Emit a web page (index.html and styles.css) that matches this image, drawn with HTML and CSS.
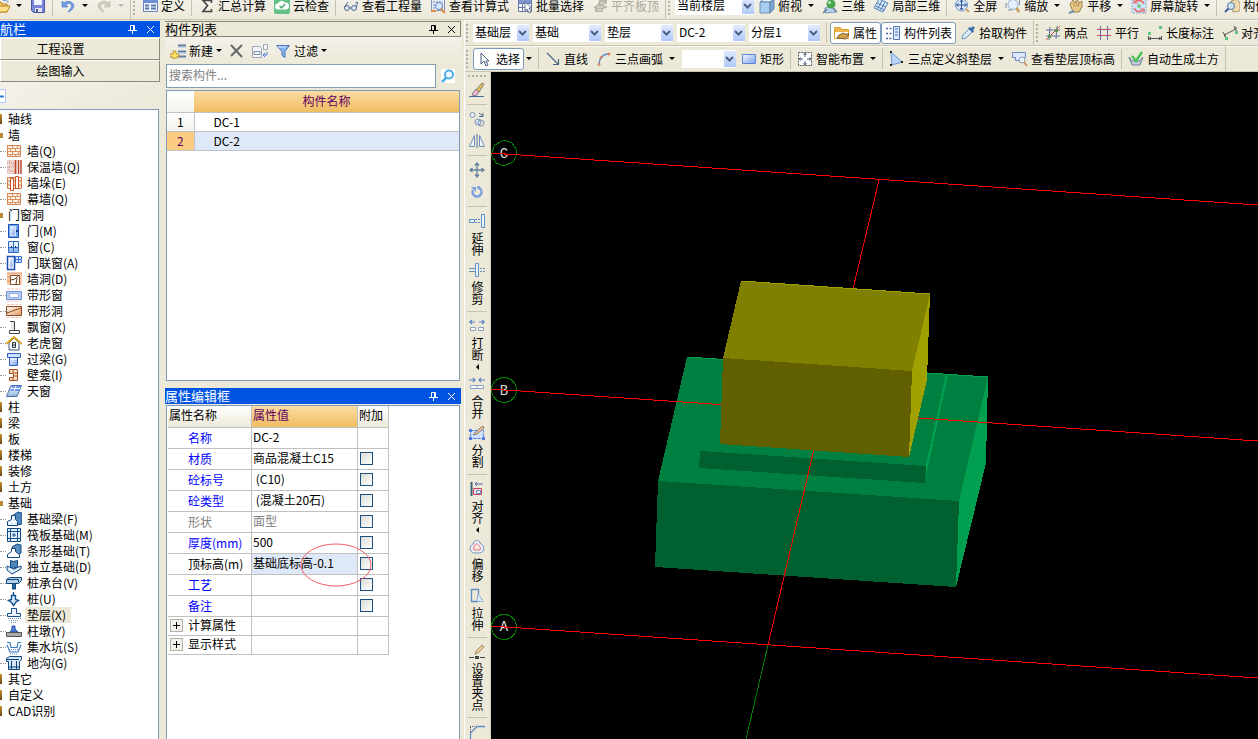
FILE: index.html
```html
<!DOCTYPE html>
<html lang="zh-CN">
  <head>
    <meta charset="UTF-8" />
    <meta name="viewport" content="width=device-width, initial-scale=1.0" />
    <title>绘图输入</title>
    <link rel="stylesheet" href="styles.css">
  </head>
  <body>
    <!-- shared gradients and symbols -->
    <svg class="defs" aria-hidden="true">
      <defs>
        <linearGradient id="blue" x1="0" y1="0" x2="1" y2="1"><stop offset="0" stop-color="#f4f9ff"/><stop offset="1" stop-color="#7da2e8"/></linearGradient>
        <linearGradient id="orange" x1="0" y1="0" x2="1" y2="1"><stop offset="0" stop-color="#fff"/><stop offset="1" stop-color="#e8965a"/></linearGradient>
        <linearGradient id="steel" x1="0" y1="0" x2="0" y2="1"><stop offset="0" stop-color="#fff"/><stop offset="1" stop-color="#8fb4d8"/></linearGradient>
      </defs>
      <symbol id="bricks" viewBox="0 0 16 16"><path d="M1.500 2.500h13v11h-13z" fill="#fdf1e4" stroke="#d0804f"/><path d="M1 5.500h14M1 8.500h14M1 11.500h14M6.500 2v3M11.500 2v3M4.500 6v3M9.500 6v3M6.500 9v3M12.500 9v3M4.500 11v3M9.500 11v3" stroke="#dc9160" fill="none"/></symbol>
      <symbol id="pin" viewBox="0 0 9 9"><path d="M2.500 5V.5h4V5M5.500 1v4M0 5.500h9M4.500 6v3" fill="none" stroke="currentColor"/></symbol>
      <symbol id="cross" viewBox="0 0 9 9"><path d="M1 1l7 7M8 1L1 8" fill="none" stroke="currentColor"/></symbol>
    </svg>

    <div class="toolbar topbar">
      <button aria-label="打开"><svg class="ico" viewBox="0 0 16 16"><path d="M1 4h6l1 2h5v8H1z" fill="#f4c860" stroke="#b98224"/><path d="M4 8h12l-3 6H1z" fill="#ffe08c" stroke="#b98224"/><path d="M9 3c3-2 5 0 5 2" stroke="#5b86c8" fill="none"/></svg></button>
      <button class="caret" aria-label="打开选项"></button>
      <button aria-label="保存"><svg class="ico" viewBox="0 0 16 16"><path d="M1.500 1.500h13v13h-11l-2-2z" fill="#7b88d8" stroke="#4a55a4"/><path d="M4 1h8v6H4z" fill="#f2f4ff"/><path d="M5 10h7v4H5z" fill="#dfe3ee"/><path d="M6 11h2v3H6z" fill="#4a55a4"/></svg></button>
      <span class="sep"></span>
      <button aria-label="撤销"><svg class="ico" viewBox="0 0 16 16"><path d="M2 3v6h6L6 7c3-3 7-1 5 3l-3 4c6-2 8-8 3-10C8 3 6 3 4 5z" fill="#6f9be4" stroke="#4774c4" stroke-width=".6"/></svg></button>
      <button class="caret" aria-label="撤销选项"></button>
      <button aria-label="恢复" disabled><svg class="ico" viewBox="0 0 16 16"><path d="M14 3v6H8l2-2C7 4 3 6 5 10l3 4C2 12 0 6 5 4c3-1 5-1 7 1z" fill="#cfcdc2" stroke="#b5b2a5" stroke-width=".6"/></svg></button>
      <button class="caret dim" aria-label="恢复选项" disabled></button>
      <span class="group-end"></span><span class="grip"></span>
      <button><svg class="ico" viewBox="0 0 16 16"><path d="M1.500 2.500h14v11h-14z" fill="#edf3ff" stroke="#6b82b8"/><path d="M1 2h15v3H1z" fill="#6d8fd6"/><path d="M3 7.500h4M3 10.500h4M9 7.500h5M9 10.500h5" stroke="#5c77b4" stroke-width="2"/></svg>定义</button>
      <span class="sep"></span>
      <button><svg class="ico" viewBox="0 0 16 16"><path d="M12.500 5V2.500H4l4.500 5L4 13.500h8.500V11" fill="none" stroke="#444" stroke-width="1.600"/></svg>汇总计算</button>
      <button><svg class="ico" viewBox="0 0 16 16"><rect width="16" height="16" rx="2" fill="#62c184"/><path d="M4 11.500a3 3 0 0 1 0-6 4 4 0 0 1 7-1 3.500 3.500 0 0 1 1 7z" fill="#fff"/><path d="M5.500 8l2 2 3.500-4" stroke="#41a667" fill="none" stroke-width="1.400"/></svg>云检查</button>
      <span class="sep"></span>
      <button><svg class="ico" viewBox="0 0 16 16"><circle cx="4" cy="10" r="2.500" fill="#dce8fa" stroke="#56678c"/><circle cx="11" cy="10" r="2.500" fill="#dce8fa" stroke="#56678c"/><path d="M6.500 10h2M1.500 9L5 4M13.500 9l1-5-2 1" stroke="#56678c" fill="none"/></svg>查看工程量</button>
      <button><svg class="ico" viewBox="0 0 16 16"><path d="M1.500 1.500h13v11h-13z" fill="#e8eefa" stroke="#8492b5"/><path d="M3 4h10M3 7h10M3 10h10" stroke="#6c7ca6" stroke-dasharray="2 1"/><circle cx="9" cy="8" r="3.500" fill="#d8ebff" stroke="#6585bb"/><path d="M11 11l4 4M1 13h5" stroke="#d98c3d" stroke-width="2"/></svg>查看计算式</button>
      <button><svg class="ico" viewBox="0 0 16 16"><path d="M1.500 1.500h13v12h-13zM1 5.500h13M1 9.500h13M5.500 1v12M10.500 1v12" fill="#f7f9ff" stroke="#697aa8"/><path d="M2 2h12v3H2z" fill="#8296cf"/><path d="M8 4v9l2-2 2 4 2-1-2-4h3z" fill="#fff" stroke="#44577f" stroke-width=".8"/></svg>批量选择</button>
      <button disabled><svg class="ico" viewBox="0 0 16 16"><path d="M1 10l5-4 1-4 8-1v4l-4 3h4v2l-4 1v3H3v-4z" fill="#b9b6a8"/><path d="M5 9h6M5 12h5M8 5h5" stroke="#ece9d8"/></svg>平齐板顶</button>
      <span class="group-end"></span><span class="grip"></span>
      <select class="combo floor" aria-label="当前楼层"><option>当前楼层</option></select>
      <button><svg class="ico" viewBox="0 0 16 16"><path d="M1 4l4-3h10l-4 3z" fill="#e8f4ff" stroke="#57789e" stroke-width=".8"/><path d="M1 4h10v11H1z" fill="#a9cdee" stroke="#57789e" stroke-width=".8"/><path d="M11 4l4-3v10l-4 4z" fill="#7aa6d2" stroke="#57789e" stroke-width=".8"/></svg>俯视</button>
      <button class="caret" aria-label="视图选项"></button>
      <button><svg class="ico" viewBox="0 0 16 16"><path d="M3 10l7-3 4 7-11 1z" fill="#b6d0ee" stroke="#6484ab" stroke-width=".8"/><circle cx="9" cy="6" r="4.500" fill="#4aa850"/><circle cx="7.500" cy="4.500" r="1.500" fill="#bfeab8"/><path d="M1 15l4-4M11 10l4 4" stroke="#69809f" stroke-width="1.500"/></svg>三维</button>
      <button><svg class="ico" viewBox="0 0 16 16"><path d="M1 10L6 1l9 4-5 9z" fill="#cfe5fb" stroke="#5c83b3"/><path d="M4 5l9 4M2.500 8l9 4M9 2.500L4.500 11M12 4L7.500 12.500" stroke="#5c83b3"/></svg>局部三维</button>
      <span class="sep"></span>
      <button><svg class="ico" viewBox="0 0 16 16"><circle cx="7.500" cy="7" r="6" fill="#d8e7fb" stroke="#7590b8"/><path d="M7.500 2v10M2.500 7h10M6 4l1.500-2L9 4M6 10l1.500 2L9 10M4.500 5.500L2.500 7l2 1.500M10.500 5.500l2 1.500-2 1.500" fill="none" stroke="#35599c"/><path d="M12 11l3 3" stroke="#d5a55d" stroke-width="2"/></svg>全屏</button>
      <button><svg class="ico" viewBox="0 0 16 16"><circle cx="8" cy="6.500" r="5" fill="#e5f0fc" stroke="#8fa9c8"/><path d="M11.500 10l2.500 4" stroke="#cc9c57" stroke-width="2.500"/><path d="M1 5v5M3 12h4M14.500 2v5" stroke="#7a93b3"/></svg>缩放</button>
      <button class="caret" aria-label="缩放选项"></button>
      <button><svg class="ico" viewBox="0 0 16 16"><path d="M2 6l3-4 2 3 2-4 2 4 3-2v6l-3 5H5z" fill="#e9c682" stroke="#9d8250"/><path d="M5 5l2 4M8 4l1 4M11 5l-1 4" stroke="#9d8250" stroke-width=".8"/><path d="M1 15l5-2" stroke="#718eb9" stroke-width="2"/></svg>平移</button>
      <button class="caret" aria-label="平移选项"></button>
      <button><svg class="ico" viewBox="0 0 16 16"><path d="M1 1h14v14H1z" fill="#cfe6fa" stroke="#88acd0" stroke-dasharray="2 1"/><path d="M3 10a5.500 5.500 0 0 0 9 2M13 6a5.500 5.500 0 0 0-9-2" fill="none" stroke="#ea6260" stroke-width="1.500"/><path d="M3 1v4h4M13 15v-4H9" fill="none" stroke="#ea6260" stroke-width="1.200"/><circle cx="8" cy="8" r="2" fill="#79c583"/></svg>屏幕旋转</button>
      <button class="caret" aria-label="旋转选项"></button>
      <span class="sep"></span>
      <button><svg class="ico" viewBox="0 0 16 16"><path d="M7 3l6-2 3 4v8l-7 1z" fill="#eed9ad" stroke="#9a885f" stroke-width=".8"/><circle cx="7" cy="8" r="3.500" fill="#cfe4fa" stroke="#58789f"/><path d="M4.500 10.500L1 14" stroke="#375f98" stroke-width="2"/></svg>构件</button>
    </div>

    <div class="workspace">
      <nav class="nav">
        <div class="panel-title active">航栏<span class="title-tools"><svg><use href="#pin"/></svg><svg><use href="#cross"/></svg></span></div>
        <button class="nav-button">工程设置</button>
        <button class="nav-button">绘图输入</button>
        <div class="nav-tools"><svg viewBox="0 0 6 14"><path d="M0 .5h5.500v13H0" fill="#fff" stroke="#b4c5ff"/><path d="M0 7.500h4" stroke="#2f7ed0" stroke-width="2"/></svg></div>
        <ul class="tree">
          <li class="root"><i class="folder"></i><span>轴线</span></li>
          <li class="root"><i class="folder open"></i><span>墙</span></li>
          <li><svg><use href="#bricks"/></svg><span>墙(Q)</span></li>
          <li><svg viewBox="0 0 16 16"><path d="M1 1h10v14H1z" fill="#f2d8d2"/><path d="M1 4h9M1 8h9M1 12h9M4 1v3M7 4v4M3 8v4M7 12v3" stroke="#c98f88" stroke-dasharray="1 1"/><path d="M9.500 1v14M12.500 1v14M15 1v14" stroke="#b8452a" stroke-width="1.500"/></svg><span>保温墙(Q)</span></li>
          <li><svg viewBox="0 0 16 16"><path d="M1.500 2.500h14v11h-14z" fill="#fde5d3" stroke="#d0804f"/><path d="M1 6h14M1 10h14" stroke="#d58a5c"/><path d="M4.500 3.500h3v12h-3zM9.500 1.500h3v12h-3z" fill="#fff" stroke="#cf5526"/></svg><span>墙垛(E)</span></li>
          <li><svg><use href="#bricks"/></svg><span>幕墙(Q)</span></li>
          <li class="root"><i class="folder open"></i><span>门窗洞</span></li>
          <li><svg viewBox="0 0 16 16"><path d="M2.500 1.500h10v13h-10z" fill="#6fa1ee" stroke="#1e4fb6"/><path d="M4.500 3.500h5v9h-5z" fill="url(#blue)" stroke="#d7e6ff"/><path d="M10 7h2v2h-2z" fill="#113a82"/></svg><span>门(M)</span></li>
          <li><svg viewBox="0 0 16 16"><path d="M2.500 2.500h10v11h-10z" fill="#e6f0ff" stroke="#2f6ac4"/><path d="M3 9h9v4H3z" fill="#95b9f2"/><path d="M7.500 3v11M3 8.500h9" stroke="#2f6ac4"/><path d="M5 8h1M9 8h1" stroke="#123c80" stroke-width="2"/></svg><span>窗(C)</span></li>
          <li><svg viewBox="0 0 16 16"><path d="M1.500 1.500h7v13h-7z" fill="#fff" stroke="#1a4cb0" stroke-width="1.500"/><path d="M3.500 3.500h3v9h-3z" fill="url(#blue)"/><path d="M9.500 1.500h6v6h-6zM12.500 1v6M9 4.500h6" fill="#d7e6ff" stroke="#3d74d0"/></svg><span>门联窗(A)</span></li>
          <li><svg viewBox="0 0 16 16"><path d="M1 2h15v12H1z" fill="#f9c9a8"/><path d="M4.500 4.500h9v9h-9z" fill="#fff" stroke="#8c4a25"/><path d="M5 9l4-1 3-3M10 13l1-6" fill="none" stroke="#5f3a22"/><path d="M1 6h3M1 10h3M1 2h15" stroke="#d88b68"/></svg><span>墙洞(D)</span></li>
          <li><svg viewBox="0 0 16 16"><path d="M1 2h14M1 14h14" stroke="#f6c1b6" stroke-dasharray="3 1"/><path d="M.5 4.500h15v8H.5z" fill="#b9cff5" stroke="#7093d8"/><path d="M3.500 6.500h9v4h-9z" fill="#fff" stroke="#93aee0"/></svg><span>带形窗</span></li>
          <li><svg viewBox="0 0 16 16"><path d="M1 1.500h14M1 14.500h14" stroke="#f6c1b6" stroke-dasharray="3 1"/><path d="M.5 3.500h15v9H.5z" fill="url(#orange)" stroke="#8c4a25"/><path d="M1 10l8-3 6-2" stroke="#8c4a25" fill="none"/></svg><span>带形洞</span></li>
          <li><svg viewBox="0 0 16 16"><path d="M5 2h3v9H5z" fill="#e7e7e7"/><path d="M4 2.500h4.500V11M3.500 14.500h10v-3h-10z" fill="none" stroke="#444"/></svg><span>飘窗(X)</span></li>
          <li><svg viewBox="0 0 16 16"><path d="M3 8v7h10V8L8 3z" fill="#fff" stroke="#33547c"/><path d="M0 9l8-7 8 7" stroke="#e0a820" stroke-width="2" fill="none"/><path d="M6.500 7.500h3v5h-3zM6 10h4" stroke="#333" fill="#d9eaff"/></svg><span>老虎窗</span></li>
          <li><svg viewBox="0 0 16 16"><path d="M1.500 2.500h13v4h-13z" fill="#cfe0ff" stroke="#2d5cc0"/><path d="M3.500 6.500h8v8h-8z" fill="url(#blue)" stroke="#2d5cc0"/><path d="M5 8h6" stroke="#fff"/></svg><span>过梁(G)</span></li>
          <li><svg viewBox="0 0 16 16"><path d="M3.500 2.500h8v11h-8v-3h4v-4h-4z" fill="#fbe0c8" stroke="#a84d20"/><path d="M8 6h4M8 9h4M7 2v4M7 11v3" stroke="#a84d20"/></svg><span>壁龛(I)</span></li>
          <li><svg viewBox="0 0 16 16"><path d="M5 2.500h10.500L11 13.500H.5z" fill="url(#steel)" stroke="#4c6ea8"/><path d="M6 3h9l-2 5H4z" fill="#6c98ee"/><path d="M10 3L8 8M5 5.500h9" stroke="#fff"/></svg><span>天窗</span></li>
          <li class="root"><i class="folder"></i><span>柱</span></li>
          <li class="root"><i class="folder"></i><span>梁</span></li>
          <li class="root"><i class="folder"></i><span>板</span></li>
          <li class="root"><i class="folder"></i><span>楼梯</span></li>
          <li class="root"><i class="folder"></i><span>装修</span></li>
          <li class="root"><i class="folder"></i><span>土方</span></li>
          <li class="root"><i class="folder open"></i><span>基础</span></li>
          <li><svg viewBox="0 0 16 16"><path d="M6 5l6-4 4 1v11l-5 1z" fill="#4d86bd" stroke="#0f457d"/><path d="M1.500 14.500v-4l4-2v-4h4v4l2 2v4z" fill="#e8f3ff" stroke="#0f457d"/></svg><span>基础梁(F)</span></li>
          <li><svg viewBox="0 0 16 16"><path d="M1.500 1.500h13v13h-13z" fill="#e3f0ff" stroke="#0f457d"/><path d="M4.500 1v14M11.500 1v14M1 4.500h14M1 11.500h14M6 8h4M8 6v4" stroke="#174f8c"/></svg><span>筏板基础(M)</span></li>
          <li><svg viewBox="0 0 16 16"><path d="M6 4l5-3 4 1v8l-4 3z" fill="#5a8fc2" stroke="#0f457d"/><path d="M1.500 14.500v-3l4-3v-3h4v3l4 3v3z" fill="#fff" stroke="#0f457d"/></svg><span>条形基础(T)</span></li>
          <li><svg viewBox="0 0 16 16"><path d="M1 7l7 3 7-3v3l-9 5-5-4z" fill="#dcebfa" stroke="#0f457d"/><path d="M4.500 1.500l3 1 4-1v6l-4 2-3-2z" fill="#4d86bd" stroke="#0f457d"/></svg><span>独立基础(D)</span></li>
          <li><svg viewBox="0 0 16 16"><path d="M.5 4.500l3-2h12v3l-3 3H.5z" fill="#b5d1ea" stroke="#0f457d"/><path d="M.5 4.500h12v3" fill="none" stroke="#0f457d"/><path d="M6.500 9v5h3V9" fill="#2b6ca8" stroke="#0f457d"/></svg><span>桩承台(V)</span></li>
          <li><svg viewBox="0 0 16 16"><path d="M7.500 1v3M5.500 4.500h4v4l3 1-3 2-2 3-2-3-3-2 3-1z" fill="#dbeafa" stroke="#174f8c" stroke-width="1.400"/></svg><span>桩(U)</span></li>
          <li class="selected"><svg viewBox="0 0 16 16"><path d="M5.500 1.500h5v5h4v3h-13v-3h4z" fill="#e9f3ff" stroke="#174f8c"/><path d="M2 11.500h13M3 13.500h10M5 15.500h6" stroke="#6f90b4" stroke-dasharray="1 1"/></svg><span>垫层(X)</span></li>
          <li><svg viewBox="0 0 16 16"><path d="M6 3h3v3l3 3H4l2-3z" fill="#4b7bd4" stroke="#2a54a0"/><path d="M.5 9.500h15v4H.5z" fill="#aaa" stroke="#555"/></svg><span>柱墩(Y)</span></li>
          <li><svg viewBox="0 0 16 16"><path d="M1 3.500h3l1 5h6l1-5h3M1 6l3 7h8l3-7" fill="none" stroke="#3c7ec2" stroke-width="1.200"/><path d="M3 10.500h10M5 12.500h6M4 15h8" stroke="#5d96d0" stroke-dasharray="1 1"/></svg><span>集水坑(S)</span></li>
          <li><svg viewBox="0 0 16 16"><path d="M.5 3.500l3-2h12v3l-2 2v8h-11v-8h-2z" fill="#d3e5f6" stroke="#0f457d"/><path d="M1 4.500h12M5.500 6v8M10.500 6v8M3 12h10" stroke="#0f457d"/></svg><span>地沟(G)</span></li>
          <li class="root"><i class="folder"></i><span>其它</span></li>
          <li class="root"><i class="folder"></i><span>自定义</span></li>
          <li class="root"><i class="folder"></i><span>CAD识别</span></li>
        </ul>
      </nav>

      <div class="side">
        <section class="list-panel">
          <div class="panel-title">构件列表<span class="title-tools"><svg><use href="#pin"/></svg><svg><use href="#cross"/></svg></span></div>
          <div class="list-tools">
            <button class="new"><svg class="ico" viewBox="0 0 16 16"><path d="M8 2.500h8M8 8.500h8M8 13.500h8" stroke="#5f7c9e" stroke-width="2"/><path d="M8 4.500h8M8 10.500h8" stroke="#c4d8ee"/><path d="M3 8h3v3h3v3H6v2H3v-2H0v-3h3z" fill="#ffe169" stroke="#a78423" stroke-width=".8"/></svg>新建<i class="arrow"></i></button>
            <button aria-label="删除"><svg class="ico" viewBox="0 0 16 16"><path d="M2 2l11 12M13 2L2 13" stroke="#666" stroke-width="2"/></svg></button>
            <button aria-label="复制"><svg class="ico" viewBox="0 0 16 16"><path d="M.5 3.500h7l2 2v9h-9zM11.500 1.500h4v5h-4z" fill="#f6f8fc" stroke="#9ba6b8"/><path d="M2 8.500h6v3H2z" fill="none" stroke="#7b8daa"/><path d="M15 9v3h-3m1-2l-2 2 2 2" fill="none" stroke="#4c7ce0"/></svg></button>
            <button class="filter"><svg class="ico" viewBox="0 0 16 16"><path d="M1.500 2.500h13L10 8.500v6l-3-2v-4z" fill="#86b2f0" stroke="#4b78bd"/><path d="M3 4h8" stroke="#d8e8ff"/></svg>过滤<i class="arrow"></i></button>
          </div>
          <div class="search">
            <input type="text" placeholder="搜索构件..." aria-label="搜索构件">
            <button aria-label="搜索"><svg viewBox="0 0 14 14"><circle cx="8" cy="5.500" r="4" fill="#f2faff" stroke="#4eaee6" stroke-width="2"/><path d="M5 9l-4 4" stroke="#4eaee6" stroke-width="2.500"/></svg></button>
          </div>
          <div class="list-box">
            <table class="components">
              <tr><th class="idx"></th><th>构件名称</th></tr>
              <tr><td class="idx">1</td><td>DC-1</td></tr>
              <tr class="current"><td class="idx">2</td><td>DC-2</td></tr>
            </table>
          </div>
        </section>

        <section class="props-panel">
          <div class="panel-title active">属性编辑框<span class="title-tools"><svg><use href="#pin"/></svg><svg><use href="#cross"/></svg></span></div>
          <div class="props-box">
            <table class="props">
              <tr><th>属性名称</th><th class="value">属性值</th><th class="extra">附加</th></tr>
              <tr><td>名称</td><td>DC-2</td><td></td></tr>
              <tr><td>材质</td><td>商品混凝土C15</td><td><input type="checkbox" aria-label="材质附加"></td></tr>
              <tr><td>砼标号</td><td>&nbsp;(C10)</td><td><input type="checkbox" aria-label="砼标号附加"></td></tr>
              <tr><td>砼类型</td><td>&nbsp;(混凝土20石)</td><td><input type="checkbox" aria-label="砼类型附加"></td></tr>
              <tr class="muted"><td>形状</td><td>面型</td><td><input type="checkbox" aria-label="形状附加"></td></tr>
              <tr><td>厚度(mm)</td><td>500</td><td><input type="checkbox" aria-label="厚度附加"></td></tr>
              <tr class="editing"><td>顶标高(m)</td><td>基础底标高-0.1</td><td><input type="checkbox" aria-label="顶标高附加"></td></tr>
              <tr><td>工艺</td><td></td><td><input type="checkbox" aria-label="工艺附加"></td></tr>
              <tr><td>备注</td><td></td><td><input type="checkbox" aria-label="备注附加"></td></tr>
              <tr class="group"><td><button aria-label="展开"></button>计算属性</td><td></td><td></td></tr>
              <tr class="group"><td><button aria-label="展开"></button>显示样式</td><td></td><td></td></tr>
            </table>
            <svg class="mark" viewBox="0 0 72 44"><ellipse cx="36" cy="22" rx="35" ry="21" fill="none" stroke="#f25f5f"/></svg>
          </div>
        </section>
      </div>

      <main class="main">
        <div class="toolbar">
          <span class="grip"></span>
          <select class="combo short" aria-label="楼层"><option>基础层</option></select>
          <select class="combo" aria-label="构件大类"><option>基础</option></select>
          <select class="combo" aria-label="构件类型"><option>垫层</option></select>
          <select class="combo" aria-label="构件"><option>DC-2</option></select>
          <select class="combo layer" aria-label="分层"><option>分层1</option></select>
          <span class="sep"></span>
          <button class="pressed"><svg class="ico" viewBox="0 0 16 16"><path d="M.5 2.500h6l1 2h7v9H.5z" fill="#fff" stroke="#d9a037"/><path d="M1 3h6l1 2h6v2H1z" fill="#efb54a"/><path d="M3 13l2-3 4-2 2 1h4l-3 5z" fill="#d8a24a" stroke="#60481c" stroke-width=".8"/></svg>属性</button>
          <button class="pressed"><svg class="ico" viewBox="0 0 16 16"><path d="M1 3.500h2M1 8.500h2M1 13.500h2M4.500 3.500h2M4.500 8.500h2M4.500 13.500h2" stroke="#4d6496" stroke-width="1.500"/><path d="M8.500 1.500h6v13h-6z" fill="#dfeaff" stroke="#4c73bd"/><path d="M10 4h3M10 7h3M10 10h3" stroke="#4167b4"/></svg>构件列表</button>
          <button><svg class="ico" viewBox="0 0 16 16"><path d="M2 14l1-4 6-6 3 3-6 6z" fill="#d9edff" stroke="#6b8fb5"/><path d="M8 3l5 5 1-2-1-1 2-2-2-2-2 2-1-1z" fill="#376dab"/></svg>拾取构件</button>
          <span class="group-end"></span><span class="grip"></span>
          <button><svg class="ico" viewBox="0 0 16 16"><path d="M5 2L4 15M12 1l-1 13M1 5h14M1 11h14" stroke="#6271a5"/><path d="M1 15L15 1" stroke="#d04040"/><path d="M3 10h3v3H3zM10 4h3v3h-3z" fill="#5b9348"/></svg>两点</button>
          <button><svg class="ico" viewBox="0 0 16 16"><path d="M4.500 1v14M11.500 1v14" stroke="#5d6dad"/><path d="M1 4.500h14M1 10.500h14" stroke="#c54e67"/></svg>平行</button>
          <button><svg class="ico" viewBox="0 0 16 16"><path d="M1 7h3v3H1zM12 1h3v3h-3z" fill="#5fc77f"/><path d="M1.500 11v4M14.500 11v4M2 13.500h12M4 12l-2 1.500L4 15M12 12l2 1.500-2 1.500" fill="none" stroke="#555"/></svg>长度标注</button>
          <button><svg class="ico" viewBox="0 0 16 16"><path d="M2 10L14 4M1 7l3 6M12 1l3 6M3 9v3M12 3h3" stroke="#555" fill="none"/><path d="M3 12h3v3H3zM13 6h3v3h-3z" fill="#5fc77f"/></svg>对齐</button>
        </div>
        <div class="toolbar draw-tools">
          <span class="grip"></span>
          <button class="pressed"><svg class="ico" viewBox="0 0 16 16"><path d="M4 2v11l3-3 2 5 2-1-2-4h3z" fill="#fff" stroke="#44577f"/></svg>选择</button>
          <button class="caret" aria-label="选择选项"></button>
          <span class="sep"></span>
          <button><svg class="ico" viewBox="0 0 16 16"><path d="M2 2l11 11M13.500 8v5.500H8" fill="none" stroke="#4a6585" stroke-width="1.200"/></svg>直线</button>
          <button><svg class="ico" viewBox="0 0 16 16"><path d="M3 14C3 8 6 3 13 3" fill="none" stroke="#5f88c6" stroke-width="1.300"/><circle cx="3" cy="13.500" r="1" fill="#f4cbb8" stroke="#d96b50"/><circle cx="5" cy="6.500" r="1" fill="#f4cbb8" stroke="#d96b50"/><circle cx="13" cy="3" r="1" fill="#f4cbb8" stroke="#d96b50"/></svg>三点画弧</button>
          <button class="caret" aria-label="画弧选项"></button>
          <select class="combo arc" aria-label="画弧参数"><option></option></select>
          <button><svg class="ico" viewBox="0 0 16 16"><path d="M1.500 3.500h13v9h-13z" fill="url(#blue)" stroke="#5f86d5"/></svg>矩形</button>
          <span class="sep"></span>
          <button><svg class="ico" viewBox="0 0 16 16"><path d="M1.500 1.500h13v13h-13z" fill="#fff" stroke="#555" stroke-dasharray="2 1"/><path d="M8 2v4M8 10v4M2 8h4M10 8h4M6.500 4L8 2l1.500 2M6.500 12L8 14l1.500-2M4 6.500L2 8l2 1.500M12 6.500L14 8l-2 1.500" fill="none" stroke="#4f6287"/></svg>智能布置</button>
          <button class="caret" aria-label="布置选项"></button>
          <span class="sep"></span>
          <button><svg class="ico" viewBox="0 0 16 16"><path d="M2 1l11 10-10 3z" fill="#bcd5f7" stroke="#6c96d0"/><path d="M1 0h2v2H1zM12 10h2v2h-2zM1 13h2v2H1z" fill="#222"/></svg>三点定义斜垫层</button>
          <button class="caret" aria-label="斜垫层选项"></button>
          <button><svg class="ico" viewBox="0 0 16 16"><path d="M.5 1.500h13v5h-3v3h-7v-3h-3z" fill="#dbe8ff" stroke="#6c89c8"/><circle cx="10" cy="9" r="3" fill="#eff7ff" stroke="#8f9db2"/><path d="M12 11l3 4" stroke="#cc9b65" stroke-width="2"/></svg>查看垫层顶标高</button>
          <span class="sep"></span>
          <button><svg class="ico" viewBox="0 0 16 16"><path d="M1 6l3 8h8l3-8-3 4H4z" fill="#c1d2df" stroke="#6c8196"/><path d="M4 5l4 5 6-9" fill="none" stroke="#4ec05a" stroke-width="2.500"/></svg>自动生成土方</button>
          <span class="group-end"></span>
        </div>

        <div class="stage">
          <div class="edit-bar">
            <span class="grip-h"></span>
            <button aria-label="删除"><svg class="ico" viewBox="0 0 16 16"><path d="M7 8l6-7 2 1-5 8z" fill="#e7c158" stroke="#6c6a69" stroke-width=".8"/><path d="M7 7l3 3-2 3-4 1-1-2z" fill="#eeb6ca" stroke="#656a84" stroke-width=".8"/><path d="M0 14.500h15" stroke="#496b9b"/></svg></button>
            <span class="sep-h"></span>
            <button aria-label="复制"><svg class="ico" viewBox="0 0 16 16"><circle cx="3.500" cy="4" r="2.500" fill="#e9effb" stroke="#8195b6"/><circle cx="9" cy="11" r="3" fill="#d6e2f4" stroke="#8195b6"/><circle cx="12" cy="12" r="3" fill="none" stroke="#8195b6"/><path d="M10 2l4 3M14 2v3.500h-4" fill="none" stroke="#4b668f"/></svg></button>
            <button aria-label="镜像"><svg class="ico" viewBox="0 0 16 16"><path d="M5.500 2.500v11h-5zM10.500 2.500v11h5z" fill="#eff5ff" stroke="#6f8db7"/><path d="M8 1v14" stroke="#4d719f"/></svg></button>
            <span class="sep-h"></span>
            <button aria-label="移动"><svg class="ico" viewBox="0 0 16 16"><path d="M8 1v14M1 8h14M6 3.500L8 1l2 2.500M6 12.500L8 15l2-2.500M3.500 6L1 8l2.500 2M12.500 6L15 8l-2.500 2" fill="none" stroke="#64809f" stroke-width="1.300"/></svg></button>
            <button aria-label="旋转"><svg class="ico" viewBox="0 0 16 16"><path d="M4 6a4.500 4.500 0 1 0 4-2.500h3" fill="none" stroke="#7fa0dd" stroke-width="2.500"/><path d="M2 3h5v5z" fill="#7fa0dd"/></svg></button>
            <span class="sep-h"></span>
            <button><svg class="ico" viewBox="0 0 16 16"><path d="M.5 6.500h5v3h-5zM12.500 1.500h3v13h-3z" fill="#e8f2ff" stroke="#6490c4"/><path d="M6 6.500h5M6 9.500h5" stroke="#6490c4" stroke-dasharray="2 1"/></svg><span>延伸</span></button>
            <button><svg class="ico" viewBox="0 0 16 16"><path d="M6.500 1.500h3v13h-3z" fill="#e8f2ff" stroke="#6490c4"/><path d="M0 6.500h6M0 9.500h6" stroke="#6490c4"/><path d="M11 6.500h5M11 9.500h5" stroke="#6490c4" stroke-dasharray="2 1"/></svg><span>修剪</span></button>
            <span class="sep-h"></span>
            <button><svg class="ico" viewBox="0 0 16 16"><path d="M0 4h6M10 4h6M3 2L1 4l2 2M13 2l2 2-2 2" fill="none" stroke="#5b85c2" stroke-width="1.200"/><path d="M1.500 9.500h5v3h-5zM9.500 9.500h5v3h-5z" fill="#fff" stroke="#8a9fbe"/></svg><span>打断</span><i class="arrow-v"></i></button>
            <button><svg class="ico" viewBox="0 0 16 16"><path d="M0 4h6M10 4h6M4 2l2 2-2 2M12 2l-2 2 2 2" fill="none" stroke="#5b85c2" stroke-width="1.200"/><path d="M1.500 9.500h13v3h-13zM8 9v4" fill="#fff" stroke="#8a9fbe"/></svg><span>合并</span></button>
            <button><svg class="ico" viewBox="0 0 16 16"><path d="M1.500 5.500h13v8h-13z" fill="#cfe2fb" stroke="#4e79e0" stroke-dasharray="3 1"/><path d="M4 10l7-7 3-2 1 2-7 6z" fill="#e9c59e" stroke="#77685d" stroke-width=".8"/><path d="M0 4h3v3H0zM0 12h3v3H0zM13 12h3v3h-3z" fill="#4e79e0"/></svg><span>分割</span></button>
            <span class="sep-h"></span>
            <button><svg class="ico" viewBox="0 0 16 16"><path d="M2.500 1v14" stroke="#3d6279" stroke-width="2"/><path d="M4.500 7.500h8v6h-8z" fill="#f8ddeb" stroke="#c8405c"/><path d="M7.500 9.500h4v3h-4z" fill="#fff" stroke="#6788c8"/><path d="M6 3h8M8 1L6 3l2 2" fill="none" stroke="#5c60b0"/></svg><span>对齐</span><i class="arrow-v"></i></button>
            <button><svg class="ico" viewBox="0 0 16 16"><path d="M5 3c2-3 5-2 6 1 5 3 5 9 0 10H5C0 13 0 7 4 5z" fill="#e8eef9" stroke="#7892b9"/><path d="M6 6c1-2 3-1 4 1 2 2 2 4 0 4H6C4 11 4 9 5 8z" fill="#ffe7e4" stroke="#e06d68"/></svg><span>偏移</span></button>
            <button><svg class="ico" viewBox="0 0 16 16"><path d="M2.500 1.500h7v4M2.500 1v12.500H9" fill="none" stroke="#5e8dc7" stroke-width="1.300"/><path d="M9 5l5 8.500H8z" fill="#e4edf9" stroke="#5e8dc7" stroke-dasharray="2 1"/></svg><span>拉伸</span></button>
            <span class="sep-h"></span>
            <button><svg class="ico" viewBox="0 0 16 16"><path d="M6 10l1-3 6-6 2 2-6 6z" fill="#ebce91" stroke="#8a7c66" stroke-width=".8"/><path d="M0 13.500h5M11 13.500h5" stroke="#444"/><path d="M6 12h4v3H6z" fill="#444"/></svg><span>设置夹点</span></button>
            <span class="sep-h"></span>
            <button aria-label="倒角"><svg class="ico" viewBox="0 0 16 16"><path d="M1.500 15V9L8 2.500h8" fill="none" stroke="#5e8dc7" stroke-width="1.300"/><path d="M1 2.500h6M1.500 3v5" stroke="#555" stroke-dasharray="1 1"/></svg></button>
          </div>

          <svg class="view" viewBox="491 72 767 667" preserveAspectRatio="xMinYMin slice" shape-rendering="crispEdges">
            <path d="M491 153L1258 205M879 180L853 289" class="axis"/>
            <!-- lower footing -->
            <path d="M687 357L988 377 959 501 658 481z" fill="#008040"/>
            <path d="M658 481L959 501 956 587 655 567z" fill="#006030"/>
            <path d="M988 377L986 463 956 587 959 501z" fill="#00a050"/>
            <path d="M687 357L988 377" stroke="#00a050"/>
            <path d="M700 451L926 466 925 483 699 468z" fill="#006030"/>
            <path d="M946 374L948 375 926 476 926 465z" fill="#00a050"/>
            <path d="M491 389L1258 441" class="axis"/>
            <path d="M814 449L768 645M491 626L1258 678" class="axis"/>
            <!-- upper column -->
            <path d="M741 281L930 294 912 371 723 358z" fill="#808000"/>
            <path d="M723 358L912 371 909 457 720 444z" fill="#606000"/>
            <path d="M930 294L927 380 909 457 912 371z" fill="#a0a000"/>
            <path d="M741 281L930 294" stroke="#a0a000"/>
            <path d="M768 645L746 739" class="ring"/>
            <g class="labels">
              <path class="ring" d="M504 140l8 3 4 6 1 5-4 8-9 4-8-3-5-9 4-9z"/>
              <text x="504" y="158">C</text>
              <circle class="ring" cx="504" cy="390" r="12.500"/>
              <text x="504" y="395">B</text>
              <circle class="ring" cx="504" cy="627" r="12.500"/>
              <text x="504" y="631">A</text>
            </g>
            <path d="M491 153L517 155M491 389L517 391M491 626L517 628" class="axis"/>
          </svg>
        </div>
      </main>
    </div>
  </body>
</html>
```

FILE: styles.css
```css
* {
  box-sizing: border-box;
}

body {
  margin: 0;
  height: 100vh;
  display: flex;
  flex-direction: column;
  overflow: hidden;
  background: #ece9d8;
  color: #000;
  font: 12px/16px "Noto Sans CJK SC", sans-serif;
}

button,
input,
select {
  font: inherit;
  color: inherit;
}

button {
  border: none;
  background: none;
  padding: 0;
  white-space: nowrap;
}

.defs {
  position: absolute;
  width: 0;
  height: 0;
}

.ico {
  width: 16px;
  height: 16px;
  flex: none;
}

/* horizontal toolbars */
.toolbar {
  display: flex;
  align-items: center;
  height: 26px;
  flex: none;
  overflow: hidden;
  border-bottom: 1px solid #c9c6b6;
  box-shadow: inset 0 1px #faf9f4;
}

.toolbar > * {
  flex: none;
}

.toolbar button {
  display: flex;
  align-items: center;
  gap: 3px;
  height: 22px;
  padding: 0 4px;
}

.toolbar button:disabled {
  color: #aca899;
}

.topbar {
  height: 28px;
  margin: -8px 0 0 -10px;
  line-height: 12px;
  background: linear-gradient(#f5f4ee, #ece9d8);
}

.toolbar .caret {
  width: 12px;
  padding: 0 2px;
}

.caret::before,
.arrow {
  content: "";
  border: 3px solid transparent;
  border-top-color: #000;
  border-bottom: none;
}

.caret.dim::before {
  border-top-color: #bbb8aa;
}

.toolbar .pressed {
  padding: 0 3px;
  background: #fff;
  border: 1px solid #7c9cbd;
  border-radius: 3px;
}

.sep {
  width: 1px;
  height: 20px;
  margin: 0 3px 0 2px;
  background: #c5c2b0;
}

.draw-tools .sep {
  margin: 0 2px;
}

.group-end {
  width: 1px;
  height: 26px;
  margin: 0 2px;
  background: #c5c2b0;
}

.grip {
  width: 2px;
  height: 18px;
  margin: 0 3px 0 0;
  background: repeating-linear-gradient(#b4b1a2 0 2px, transparent 2px 4px);
}

.grip:first-child {
  margin: 0 5px 0 1px;
}

.combo {
  width: 68px;
  height: 18px;
  margin-right: 4px;
  padding: 0 0 2px 2px;
  border: none;
  border-radius: 0;
  appearance: none;
  line-height: 16px;
  background:
    url("data:image/svg+xml,%3Csvg xmlns='http://www.w3.org/2000/svg' width='11' height='16'%3E%3Cpath d='M2 6l3.500 3.500L9 6' fill='none' stroke='%234d6185' stroke-width='2'/%3E%3C/svg%3E") right 1px center no-repeat,
    linear-gradient(#e1eafe, #aec8f7) right center / 12px 16px no-repeat,
    #fff;
}

.combo.short {
  width: 56px;
}

.combo.layer {
  width: 71px;
}

.combo.arc {
  width: 54px;
  margin: 0 1px 0 3px;
}

.combo.floor {
  width: 79px;
  margin: 0 1px 0 2px;
}

/* docked panels */
.workspace {
  flex: 1;
  min-height: 0;
  display: flex;
  gap: 3px;
}

.nav {
  width: 161px;
  flex: none;
  padding: 1px 1px 0 0;
  display: flex;
  flex-direction: column;
}

.panel-title {
  display: flex;
  align-items: center;
  justify-content: space-between;
  height: 16px;
  flex: none;
  padding-right: 4px;
  font-size: 13px;
  line-height: 14px;
  border: 1px solid #85826f;
  border-left: none;
}

.panel-title.active {
  background: #0054e3;
  border-color: #0054e3;
  color: #fff;
}

.title-tools {
  display: flex;
  gap: 9px;
}

.title-tools svg {
  width: 9px;
  height: 9px;
}

.nav-button {
  height: 22px;
  flex: none;
  padding-right: 39px;
  border: 1px solid;
  border-color: #fff #8d8a7b #8d8a7b #fff;
}

.panel-title + .nav-button {
  margin-top: 1px;
}

.nav-tools {
  height: 27px;
  flex: none;
  padding-top: 7px;
  background: linear-gradient(150deg, #f3f2ea, #ece9d8);
}

.nav-tools svg {
  display: block;
  width: 6px;
  height: 14px;
}

.tree {
  flex: 1;
  min-height: 0;
  margin: 0 1px 0 0;
  padding: 1px 0 0;
  list-style: none;
  background: #fff;
  border: 1px solid #7f9db9;
  border-width: 1px 1px 0 0;
}

.tree li {
  display: flex;
  align-items: center;
  height: 16px;
}

.tree li::before {
  content: "";
  width: 6px;
  border-top: 1px dotted #999;
}

.tree li.root::before {
  content: none;
}

.tree li svg {
  width: 16px;
  height: 16px;
  margin-right: 3px;
}

.tree li span {
  padding: 0 2px;
}

.tree .selected span {
  padding-right: 5px;
  background: #ece9d8;
}

.folder {
  width: 2px;
  height: 10px;
  margin-right: 4px;
  background: linear-gradient(#c99535, #6b4310);
}

.folder.open {
  width: 3px;
  height: 5px;
  margin-right: 3px;
  background: #b98a2f;
}

.side {
  width: 297px;
  flex: none;
  padding: 1px 0 0 1px;
  display: flex;
  flex-direction: column;
  gap: 7px;
}

.list-panel {
  height: 360px;
  display: flex;
  flex-direction: column;
}

.list-tools {
  display: flex;
  align-items: center;
  gap: 7px;
  height: 27px;
  padding-left: 5px;
  background: linear-gradient(#f3f1ea, #ece9d8);
}

.list-tools button {
  display: flex;
  align-items: center;
  gap: 3px;
}

.search {
  display: flex;
  align-items: center;
  gap: 5px;
  height: 24px;
  padding-left: 1px;
}

.search input {
  width: 270px;
  height: 24px;
  padding: 0 2px 4px;
  border: 1px solid #7f9db9;
}

.search input::placeholder {
  color: #808080;
}

.search button {
  width: 14px;
  height: 14px;
  background: #fff;
}

.search svg {
  display: block;
}

.list-box {
  flex: 1;
  margin: 2px 1px 0;
  background: #fff;
  border: 1px solid #7f9db9;
}

table {
  border-collapse: collapse;
  table-layout: fixed;
}

th {
  font-weight: normal;
}

.components {
  width: 100%;
}

.components th {
  height: 21px;
  padding: 0;
  color: #600060;
  background: linear-gradient(#fbdca4, #efbd60);
}

.components td {
  height: 19px;
  padding: 0 0 0 19px;
  border: 1px solid #bfc4cc;
  border-right: none;
}

.components .idx {
  width: 27px;
  padding: 0;
  text-align: center;
  border-left: none;
  background: linear-gradient(#fff, #f4f3ee);
}

.components .current td {
  background: #dfe8f6;
}

.components .current .idx {
  background: #fbcb81;
  color: #600060;
}

.props-panel {
  flex: 1;
  min-height: 0;
  display: flex;
  flex-direction: column;
}

.props-box {
  position: relative;
  flex: 1;
  margin: 1px 1px 0;
  padding: 0 0 0 1px;
  background: #fff;
  border: 1px solid #7f9db9;
  border-bottom: none;
}

.props {
  width: 221px;
}

.props th,
.props td {
  height: 21px;
  padding: 0 0 2px 1px;
  border: 1px solid #c0c0c0;
  border-top: none;
  text-align: left;
  white-space: nowrap;
}

.props th:first-child,
.props td:first-child {
  border-left: none;
}

.props th {
  background: linear-gradient(#fff, #ece9d8);
}

.props th.value {
  width: 106px;
  color: #600060;
  background: linear-gradient(#fbdca4, #efbd60);
}

.props th.extra {
  width: 31px;
}

.props td:first-child {
  padding: 0 0 0 20px;
  color: #00f;
}

.props .muted td {
  color: #808080;
}

.props .editing td:first-child,
.props .group td:first-child {
  color: #000;
}

.props .editing td:nth-child(2) {
  background: #dfe8f6;
}

.props .group td {
  height: 19px;
}

.props .group td:first-child {
  padding-left: 2px;
}

.props input {
  display: block;
  appearance: none;
  width: 13px;
  height: 13px;
  margin: 2px 0 0 1px;
  border: 1px solid #1c5180;
  background: linear-gradient(135deg, #dcdcd7, #fff);
}

.props button {
  width: 13px;
  height: 13px;
  margin: 0 5px 2px 0;
  vertical-align: middle;
  border: 1px solid #b5b2a5;
  background:
    linear-gradient(#000, #000) center / 7px 1px no-repeat,
    linear-gradient(#000, #000) center / 1px 7px no-repeat,
    #f2f1ec;
}

/* red ring over the edited value */
.mark {
  position: absolute;
  left: 133px;
  top: 137px;
  width: 72px;
  height: 44px;
}

/* drawing area */
.main {
  flex: 1;
  min-width: 0;
  display: flex;
  flex-direction: column;
  border-left: 1px solid #fff;
}

.stage {
  flex: 1;
  min-height: 0;
  display: flex;
}

.edit-bar {
  width: 26px;
  flex: none;
  padding: 3px 1px 0 0;
  display: flex;
  flex-direction: column;
  align-items: center;
  overflow: hidden;
  border-right: 1px solid #d4d0c0;
}

.edit-bar > * {
  flex: none;
}

.edit-bar button {
  display: flex;
  flex-direction: column;
  align-items: center;
  gap: 3px;
  padding: 3px 0;
}

.edit-bar button span {
  width: 14px;
  writing-mode: vertical-rl;
  text-orientation: upright;
  line-height: 14px;
}

.grip-h {
  width: 18px;
  height: 2px;
  margin-bottom: 2px;
  background: repeating-linear-gradient(90deg, #b4b1a2 0 2px, transparent 2px 4px);
}

.sep-h {
  width: 20px;
  height: 1px;
  margin: 3px 0;
  background: #c5c2b0;
}

.arrow-v {
  height: 6px;
  border: 3px solid transparent;
  border-left: none;
  border-right-color: #000;
}

.view {
  flex: 1;
  min-width: 0;
  height: 100%;
  background: #000;
}

.axis {
  fill: none;
  stroke: #f00;
}

.ring {
  fill: none;
  stroke: #008000;
}

.labels {
  fill: #ddd;
  font: 14px "Liberation Mono", monospace;
  text-anchor: middle;
}
```
